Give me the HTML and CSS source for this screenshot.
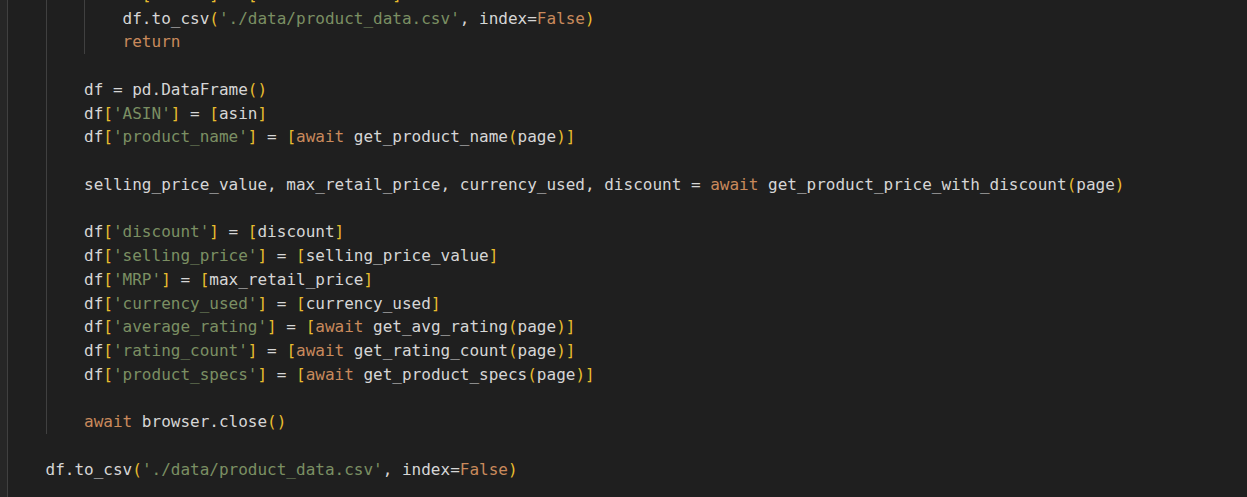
FILE: index.html
```html
<!DOCTYPE html>
<html>
<head>
<meta charset="utf-8">
<link rel="stylesheet" href="styles.css">
</head>
<body>
<div class="editor">
  <div class="gutter"></div>
  <div class="code">
    <div class="line"><span class="ind"></span><span class="ind"></span><span class="ind"></span>df<span class="b">[</span><span class="s">'ASIN'</span><span class="b">]</span> = <span class="b">[</span><span class="s">'ASIN-REMOVED'</span><span class="b">]</span></div>
    <div class="line"><span class="ind"></span><span class="ind"></span><span class="ind"></span>df.to_csv<span class="b">(</span><span class="s">'./data/product_data.csv'</span>, index=<span class="k">False</span><span class="b">)</span></div>
    <div class="line"><span class="ind"></span><span class="ind"></span><span class="ind"></span><span class="k">return</span></div>
    <div class="line"><span class="ind"></span><span class="ind"></span></div>
    <div class="line"><span class="ind"></span><span class="ind"></span>df = pd.DataFrame<span class="b">()</span></div>
    <div class="line"><span class="ind"></span><span class="ind"></span>df<span class="b">[</span><span class="s">'ASIN'</span><span class="b">]</span> = <span class="b">[</span>asin<span class="b">]</span></div>
    <div class="line"><span class="ind"></span><span class="ind"></span>df<span class="b">[</span><span class="s">'product_name'</span><span class="b">]</span> = <span class="b">[</span><span class="k">await</span> get_product_name<span class="b">(</span>page<span class="b">)]</span></div>
    <div class="line"><span class="ind"></span><span class="ind"></span></div>
    <div class="line"><span class="ind"></span><span class="ind"></span>selling_price_value, max_retail_price, currency_used, discount = <span class="k">await</span> get_product_price_with_discount<span class="b">(</span>page<span class="b">)</span></div>
    <div class="line"><span class="ind"></span><span class="ind"></span></div>
    <div class="line"><span class="ind"></span><span class="ind"></span>df<span class="b">[</span><span class="s">'discount'</span><span class="b">]</span> = <span class="b">[</span>discount<span class="b">]</span></div>
    <div class="line"><span class="ind"></span><span class="ind"></span>df<span class="b">[</span><span class="s">'selling_price'</span><span class="b">]</span> = <span class="b">[</span>selling_price_value<span class="b">]</span></div>
    <div class="line"><span class="ind"></span><span class="ind"></span>df<span class="b">[</span><span class="s">'MRP'</span><span class="b">]</span> = <span class="b">[</span>max_retail_price<span class="b">]</span></div>
    <div class="line"><span class="ind"></span><span class="ind"></span>df<span class="b">[</span><span class="s">'currency_used'</span><span class="b">]</span> = <span class="b">[</span>currency_used<span class="b">]</span></div>
    <div class="line"><span class="ind"></span><span class="ind"></span>df<span class="b">[</span><span class="s">'average_rating'</span><span class="b">]</span> = <span class="b">[</span><span class="k">await</span> get_avg_rating<span class="b">(</span>page<span class="b">)]</span></div>
    <div class="line"><span class="ind"></span><span class="ind"></span>df<span class="b">[</span><span class="s">'rating_count'</span><span class="b">]</span> = <span class="b">[</span><span class="k">await</span> get_rating_count<span class="b">(</span>page<span class="b">)]</span></div>
    <div class="line"><span class="ind"></span><span class="ind"></span>df<span class="b">[</span><span class="s">'product_specs'</span><span class="b">]</span> = <span class="b">[</span><span class="k">await</span> get_product_specs<span class="b">(</span>page<span class="b">)]</span></div>
    <div class="line"><span class="ind"></span><span class="ind"></span></div>
    <div class="line"><span class="ind"></span><span class="ind"></span><span class="k">await</span> browser.close<span class="b">()</span></div>
    <div class="line"><span class="ind"></span></div>
    <div class="line"><span class="ind"></span>df.to_csv<span class="b">(</span><span class="s">'./data/product_data.csv'</span>, index=<span class="k">False</span><span class="b">)</span></div>
    <div class="line"><span class="ind"></span></div>
  </div>
</div>
</body>
</html>
```
FILE: styles.css
```css
html, body {
  margin: 0;
  padding: 0;
  background: #1f1f1f;
  height: 100%;
  overflow: hidden;
}

.editor {
  display: flex;
  height: 100%;
  background: #1f1f1f;
}

.gutter {
  width: 7px;
  flex: none;
  background: #262626;
}

.code {
  flex: 1;
  margin-top: -17px;
  font-family: "DejaVu Sans Mono", "Liberation Mono", monospace;
  font-size: 16px;
  line-height: 23.74px;
  color: #d6d6d6;
}

.line {
  display: flex;
  height: 23.74px;
  white-space: pre;
}

.ind {
  display: inline-block;
  width: 4ch;
  flex: none;
  border-left: 1px solid #404040;
  box-sizing: border-box;
}

.k { color: #c98a5c; }
.s { color: #7b8f63; }
.b { color: #e8bd2e; }
```
